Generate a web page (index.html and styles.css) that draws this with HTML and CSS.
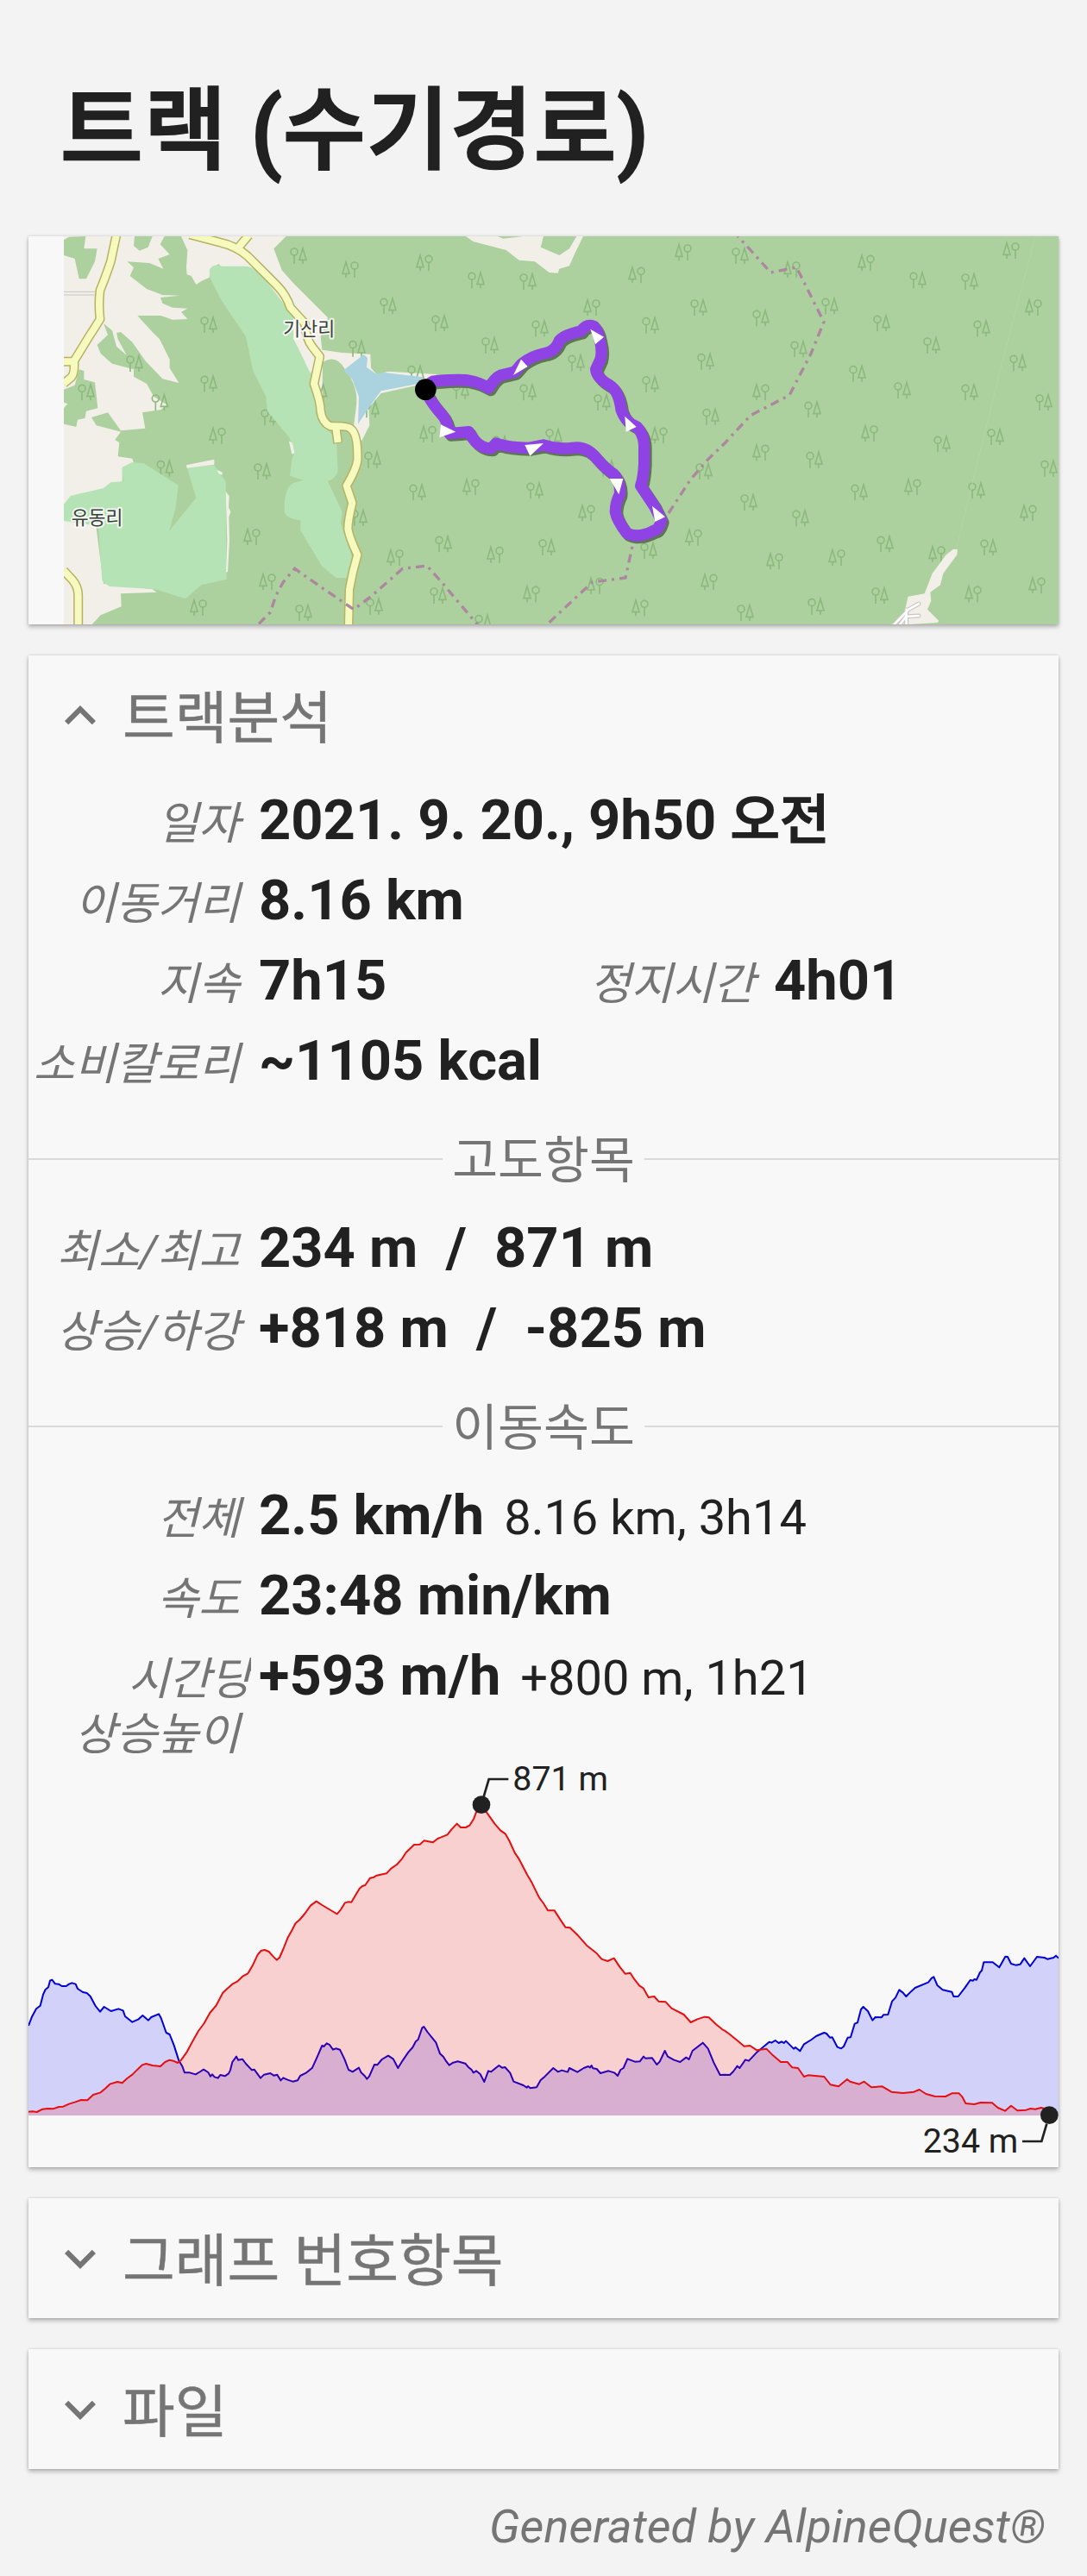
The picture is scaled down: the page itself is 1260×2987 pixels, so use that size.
FILE: index.html
```html
<!DOCTYPE html>
<html lang="ko">
  <head>
    <meta charset="UTF-8" />
    <title>트랙 (수기경로)</title>
    <link rel="stylesheet" href="styles.css">
  </head>
  <body>
    <h1>트랙 (수기경로)</h1>

    <section class="card map">
      <svg viewBox="99 42 3582 1350">
        <defs>
          <g id="treeA" class="tree">
            <circle cx="15" cy="16" r="12" />
            <path d="M15 28V58M45 44V58M45 3L33 44H57Z" />
          </g>
          <g id="treeB" class="tree">
            <circle cx="45" cy="16" r="12" />
            <path d="M45 28V58M15 44V58M15 3L3 44H27Z" />
          </g>
        </defs>
        <rect class="forest" x="222" y="42" width="3459" height="1350" />

        <!-- open land -->
        <g transform="translate(60)" class="land">
          <path d="M570 42H935L892 85 920 160 960 205 1080 325 1055 390 1060 437 1130 447 1228 452 1230 500 1250 522 1290 512 1458 522V545L1265 588 1222 640 1225 700 1197 755 1175 705 1050 690 1020 510 960 400 700 138 672 155 668 185 640 198 622 210 605 180 590 175 588 150 592 90Z" />
          <path d="M162 42H512L497 70 530 105 490 120 508 155 460 135 382 130 405 150 392 180 450 225 505 246 565 248 498 255 505 275 540 290 592 293 570 305 592 330 540 332 500 318 418 318 470 375 495 400 530 470V500L562 552 505 538 445 475 400 410 360 375 345 378 350 400 380 455 345 425 330 370 300 345 315 385 278 420 290 450 330 485 405 505V530L450 555 475 600 520 628 500 645 435 655 445 710 360 718 315 655 258 672 275 700 360 722 340 750 355 760 350 808 400 815 405 830 365 850V895L162 990Z" />
          <path d="M162 1020H270L300 1250 470 1270 485 1280 360 1285 362 1330 290 1360 260 1392H162Z" />
        </g>
        <path class="land" transform="translate(1290)" d="M330 42L355 60 470 90 515 125 570 130 620 168 650 170 655 155 690 145 705 110 738 42H715L690 85 655 108 590 80 600 42H530L460 50 440 42Z" />
        <g transform="translate(60)" class="forest">
          <path d="M162 55L180 44 238 42 232 85 278 85 270 130 240 190H215L200 120 162 108Z" />
          <path d="M408 42H470L455 80 425 92 405 75Z" />
          <path d="M162 575L200 560 215 505 232 510V540L270 550 280 640 240 650 235 675 210 680 205 705 162 695V640L175 625 162 620Z" />
          <path d="M1062 480Q1110 450 1140 505Q1190 570 1178 640L1170 702 1100 700 1060 660Z" />
        </g>

        <g id="trees"></g>

        <g transform="translate(60)" class="golf">
          <path d="M162 975L185 945 300 918 325 898 368 895 365 845 400 828 440 832 560 908 550 990 528 1068 622 952 590 845 685 838 725 895 728 1235 640 1255 585 1303 480 1270 320 1260 295 1240 282 1050 162 1032Z" />
          <path d="M668 160Q680 135 712 146L800 146Q830 152 860 190L960 320V400L1000 470 1025 520 1050 680 1110 750 1115 860Q1105 885 1080 895L1130 1000 1125 1040 1165 1160 1150 1230H1110L1060 1190 1030 1140 985 1065V1030Q940 1025 930 1005Q925 920 960 900L995 890 948 875 955 820 965 790 945 740 870 650 865 600 820 510 795 390 710 265 670 185Z" />
        </g>
        <g transform="translate(60)" class="land">
          <path d="M588 838L685 818V836L590 848ZM695 855L712 862 714 872 700 868ZM725 930L737 945 735 985 742 1000 736 1020 738 1100 732 1210H726L730 1100ZM945 755L956 760 965 795 955 800ZM985 395L1025 500 1020 520 962 400Z" />
        </g>
        <path class="water" transform="translate(60)" d="M1135 508L1205 453 1218 465 1215 498 1250 522 1270 515 1410 532 1410 552 1265 580 1232 625 1185 695 1188 600 1165 540Z" />

        <!-- top of the service road on the right side -->
        <g transform="translate(2520)">
          <path class="trail" d="M1080 42L960 500 805 1130" />
          <path class="land" d="M580 1392L625 1350 638 1295 695 1285 722 1215 770 1150 795 1130 810 1132 808 1150 760 1215 750 1255 715 1280 718 1310 705 1340 745 1380 740 1386 640 1392Z" />
          <path class="path-edge" d="M590 1392L640 1340 675 1320M610 1392L630 1365 675 1362M632 1340V1392" />
          <path class="path-fill" d="M590 1392L640 1340 675 1320M610 1392L630 1365 675 1362M632 1340V1392" />
        </g>

        <g transform="translate(60)">
          <path class="lane" d="M162 235H272M162 246H272" />
          <g id="roads">
            <path class="road-edge" d="M345 36L325 130Q305 190 288 230Q282 280 288 330Q270 360 250 390L198 475Q200 520 188 532L162 554M162 478H200M162 1205L190 1235Q212 1260 212 1290V1398M600 36L700 62Q760 75 800 110L900 210Q935 245 950 290L1000 345Q1005 400 1025 425L1052 460 1032 555Q1055 620 1055 650Q1060 690 1090 703Q1150 700 1160 712Q1185 730 1183 820Q1180 850 1145 910L1165 970Q1150 1030 1150 1060Q1155 1090 1183 1150Q1165 1210 1155 1270L1152 1398M770 80L805 38M1108 708L1115 762" />
            <path class="road" d="M345 36L325 130Q305 190 288 230Q282 280 288 330Q270 360 250 390L198 475Q200 520 188 532L162 554M162 478H200M162 1205L190 1235Q212 1260 212 1290V1398M600 36L700 62Q760 75 800 110L900 210Q935 245 950 290L1000 345Q1005 400 1025 425L1052 460 1032 555Q1055 620 1055 650Q1060 690 1090 703Q1150 700 1160 712Q1185 730 1183 820Q1180 850 1145 910L1165 970Q1150 1030 1150 1060Q1155 1090 1183 1150Q1165 1210 1155 1270L1152 1398M770 80L805 38M1108 708L1115 759" />
          </g>
          <path class="border" d="M840 1390L880 1350 900 1290 925 1245 965 1198 1050 1258 1170 1340 1230 1295 1340 1198 1425 1188 1480 1250 1530 1310 1600 1392" />
        </g>
        <path class="border" transform="translate(1290)" d="M620 1385L770 1245 885 1230 910 1115M1035 1005L1110 890 1170 820 1230 762 1320 665 1455 595 1530 450 1575 340 1480 150 1390 168 1320 90 1275 42" />

        <text class="place" x="985" y="387">기산리</text>
        <text class="place" x="248" y="1044">유동리</text>
        <rect class="blank" x="99" y="42" width="123" height="1350" />

        <!-- recorded track -->
        <g transform="translate(1290)">
          <path class="track-shadow" transform="translate(7 8)" d="M190 575Q205 545 225 545Q320 538 345 545Q375 550 410 570Q430 535 450 526L500 514 525 485Q560 458 600 450Q640 445 655 405Q670 385 730 372Q750 345 775 355Q790 370 795 400Q806 440 798 470L782 505Q785 535 830 560Q862 580 870 645Q885 690 925 705Q950 735 950 770V830Q948 880 938 910L985 980 1010 1030Q1000 1065 985 1065Q930 1095 890 1075Q855 1030 850 1000Q850 970 865 940Q870 900 845 870Q810 845 785 815Q750 770 700 778Q650 785 600 768L550 778Q480 778 435 762L418 780Q370 780 340 722Q310 725 272 727Q265 680 245 660Q210 620 198 595" />
          <path class="track" d="M190 575Q205 545 225 545Q320 538 345 545Q375 550 410 570Q430 535 450 526L500 514 525 485Q560 458 600 450Q640 445 655 405Q670 385 730 372Q750 345 775 355Q790 370 795 400Q806 440 798 470L782 505Q785 535 830 560Q862 580 870 645Q885 690 925 705Q950 735 950 770V830Q948 880 938 910L985 980 1010 1030Q1000 1065 985 1065Q930 1095 890 1075Q855 1030 850 1000Q850 970 865 940Q870 900 845 870Q810 845 785 815Q750 770 700 778Q650 785 600 768L550 778Q480 778 435 762L418 780Q370 780 340 722Q310 725 272 727Q265 680 245 660Q210 620 198 595" />
          <path class="arrow" d="M763 365L810 392 780 418ZM522 470L545 495 495 525ZM883 668L923 705 887 722ZM978 980L1023 1018 988 1035ZM830 885L877 885 862 940ZM535 768L600 762 553 806ZM243 697L295 722 238 742Z" />
          <circle cx="190" cy="575" r="37" />
        </g>
      </svg>
    </section>

    <section class="card">
      <header class="card-head">
        <svg class="chevron" viewBox="0 0 24 24"><path d="M12 8l-6 6 1.41 1.41L12 10.83l4.59 4.58L18 14z" /></svg>
        <h2>트랙분석</h2>
      </header>
      <div class="rows first">
        <div class="row">
          <div class="item"><span class="label">일자</span><b>2021. 9. 20., 9h50 <span class="ko">오전</span></b></div>
        </div>
        <div class="row">
          <div class="item"><span class="label">이동거리</span><b>8.16 km</b></div>
        </div>
        <div class="row">
          <div class="item"><span class="label">지속</span><b>7h15</b></div>
          <div class="item"><span class="label">정지시간</span><b>4h01</b></div>
        </div>
        <div class="row">
          <div class="item"><span class="label">소비칼로리</span><b>~1105 kcal</b></div>
        </div>
      </div>
      <h3>고도항목</h3>
      <div class="rows">
        <div class="row">
          <div class="item"><span class="label">최소/최고</span><b>234 m&nbsp; /&nbsp; 871 m</b></div>
        </div>
        <div class="row">
          <div class="item"><span class="label">상승/하강</span><b>+818 m&nbsp; /&nbsp; -825 m</b></div>
        </div>
      </div>
      <h3>이동속도</h3>
      <div class="rows">
        <div class="row">
          <div class="item"><span class="label">전체</span><b>2.5 km/h</b><span class="detail">8.16 km, 3h14</span></div>
        </div>
        <div class="row">
          <div class="item"><span class="label">속도</span><b>23:48 min/km</b></div>
        </div>
        <div class="row tall">
          <div class="item"><span class="label two-lines"><span class="over">시간당</span><span>상승높이</span></span><b>+593 m/h</b><span class="detail">+800 m, 1h21</span></div>
        </div>
      </div>
      <svg class="chart" viewBox="99 0 3582 1419">
        <path id="speedArea" class="speed-area" />
        <path id="speedLine" class="speed-line" />
        <path id="altArea" class="alt-area" />
        <path id="altLine" class="alt-line" />
        <path class="leader" d="M1682 130L1700 69H1768M3640 1268L3622 1329H3555" />
        <circle class="dot" cx="1674" cy="158" r="31" />
        <circle class="dot" cx="3649" cy="1238" r="31" />
        <text class="mark" x="1783" y="108">871 m</text>
        <text class="mark end" x="3541" y="1367">234 m</text>
      </svg>
    </section>

    <section class="card">
      <header class="card-head">
        <svg class="chevron" viewBox="0 0 24 24"><path d="M16.59 8.59L12 13.17 7.41 8.59 6 10l6 6 6-6z" /></svg>
        <h2>그래프 번호항목</h2>
      </header>
    </section>

    <section class="card">
      <header class="card-head">
        <svg class="chevron" viewBox="0 0 24 24"><path d="M16.59 8.59L12 13.17 7.41 8.59 6 10l6 6 6-6z" /></svg>
        <h2>파일</h2>
      </header>
    </section>

    <footer>Generated by AlpineQuest®</footer>
    <script src="script.js"></script>
  </body>
</html>
```

FILE: styles.css
```css
body {
  margin: 0;
  padding: 0 33px;
  background-color: #f3f3f3;
  color: #212121;
  font-family: Roboto, "Noto Sans CJK KR", sans-serif;
}
h1 {
  margin: 0;
  padding: 78px 0 46px 37px;
  font-size: 104px;
  line-height: 150px;
  font-weight: 500;
  letter-spacing: 1.2px;
  -webkit-text-stroke: 2.5px #212121;
}
.card {
  background-color: #f8f8f8;
  margin-bottom: 36px;
  box-shadow: 0 3px 5px rgba(0, 0, 0, 0.26), 0 0 3px rgba(0, 0, 0, 0.14);
}
.card-head {
  display: flex;
  align-items: center;
  height: 139px;
  padding-left: 24px;
  color: #757575;
}
.chevron {
  width: 72px;
  height: 72px;
  fill: #757575;
}
h2 {
  margin: 0 0 0 13px;
  padding-top: 8px;
  font-size: 66px;
  line-height: 90px;
  font-weight: 400;
  -webkit-text-stroke: 0.5px #757575;
}
h3 {
  display: flex;
  align-items: center;
  gap: 11px;
  height: 124px;
  margin: 0;
  padding-top: 16px;
  box-sizing: border-box;
  color: #757575;
  font-size: 57.5px;
  font-weight: 400;
  line-height: 80px;
}
h3::before,
h3::after {
  content: "";
  flex: 1;
  height: 2px;
  margin-bottom: 6px;
  background-color: #dadada;
}
.rows.first {
  padding-top: 6px;
}
.row {
  display: grid;
  grid-template-columns: 1fr 1fr;
  height: 93px;
  line-height: 93px;
}
.row.tall {
  height: 143px;
}
.item {
  display: flex;
  align-items: baseline;
  white-space: nowrap;
}
.label {
  width: 258px;
  flex: none;
  box-sizing: border-box;
  padding-right: 13px;
  margin-right: 9px;
  text-align: right;
  color: #757575;
  font-size: 52px;
  font-style: italic;
}
.two-lines {
  display: flex;
  flex-direction: column;
  line-height: 64px;
  overflow: hidden;
}
.two-lines .over {
  margin-right: -14px;
}
b {
  font-size: 65px;
  font-weight: 700;
  font-kerning: none;
}
b .ko {
  font-size: 62.5px;
  font-weight: 500;
  -webkit-text-stroke: 1.5px #212121;
}
.detail {
  margin-left: 23px;
  font-size: 56px;
}
footer {
  padding: 1px 15px 0 0;
  text-align: right;
  color: #757575;
  font-size: 54.1px;
  line-height: 60px;
  font-style: italic;
}

/* map */
.map svg,
.chart {
  display: block;
  width: 100%;
}
.map svg {
  height: 450px;
}
.forest {
  fill: #add19e;
}
.land {
  fill: #f2efe9;
}
.golf {
  fill: #b5e3b5;
}
.water {
  fill: #aad3df;
}
.blank {
  fill: #f8f8f8;
}
.tree {
  fill: none;
  stroke: #8db97f;
  stroke-width: 5;
}
.trail {
  fill: none;
  stroke: #b2d5a4;
  stroke-width: 3;
}
.path-edge,
.path-fill {
  fill: none;
  stroke: #c9c6c3;
  stroke-width: 15;
  stroke-linecap: round;
}
.path-fill {
  stroke: #fff;
  stroke-width: 8;
}
.lane {
  fill: none;
  stroke: #c8c5c3;
  stroke-width: 3;
}
.road-edge,
.road {
  fill: none;
  stroke: #b5b264;
  stroke-width: 33;
  stroke-linejoin: round;
}
.road {
  stroke: #f7fabf;
  stroke-width: 24;
}
.border {
  fill: none;
  stroke: #ad86a0;
  stroke-width: 10;
  stroke-dasharray: 30 18 9 18;
}
.place {
  fill: #3c3c3c;
  stroke: rgba(255, 255, 255, 0.8);
  stroke-width: 12;
  stroke-linejoin: round;
  paint-order: stroke;
  font-size: 65px;
  font-weight: 400;
}
.track,
.track-shadow {
  fill: none;
  stroke: #8f43e5;
  stroke-width: 40;
  stroke-linejoin: round;
  stroke-linecap: round;
}
.track-shadow {
  stroke: #5f7557;
}
.arrow {
  fill: #fff;
}

/* chart */
.chart {
  height: 473px;
}
.speed-area {
  fill: rgba(0, 0, 255, 0.155);
}
.alt-area {
  fill: rgba(255, 0, 0, 0.16);
}
.speed-line,
.alt-line {
  fill: none;
  stroke: #0000d8;
  stroke-width: 6;
  stroke-linejoin: round;
}
.alt-line {
  stroke: #e50f0f;
}
.leader {
  fill: none;
  stroke: #212121;
  stroke-width: 8;
}
.dot,
.mark {
  fill: #212121;
}
.mark {
  font-size: 118px;
}
.mark.end {
  text-anchor: end;
}
```

FILE: script.js
```js
const BASE = 1239;

// x,y pairs; every block starts at its own x offset
const altitude = [
  [0, "99,1226 112,1225 128,1227 148,1217 166,1215 184,1216 205,1209 220,1208 240,1199 262,1192 282,1185 304,1186 324,1167 350,1159 366,1145 382,1130 408,1122 425,1126 442,1110 460,1097 478,1079 495,1063 508,1059 530,1065 558,1068 574,1053 590,1046 603,1049 618,1056 630,1046 650,1018 668,984 690,945 710,918 730,882 752,856 775,812 790,798 808,782 825,773 845,754 862,745 878,718 896,680 908,666 920,663 935,669 950,686 962,698 972,690 985,660 1000,622 1014,597 1028,570 1042,558 1060,537 1080,509 1100,494 1120,507 1150,525 1172,538 1185,523 1200,499 1210,496 1222,497 1235,475 1250,450"],
  [1260, "0,441 10,438 27,413 40,410 50,404 84,397 100,380 120,366 138,346 152,324 180,297 200,296 215,283 245,289 262,276 296,262 310,244 329,224 342,237 360,237 373,230 387,208 396,184 414,158 432,184 460,224 480,247 498,260 512,285 530,325 545,347 574,403 590,430 615,481 630,501 645,526 668,526 690,560 706,584 722,586 750,613 780,647 816,676 832,695 853,702 875,692 895,722 914,746 932,743 945,764 964,788 977,796 995,828 1015,825 1030,842 1055,844 1075,866 1118,888 1142,915 1165,904 1190,896 1205,898 1230,922 1252,940"],
  [2520, "0,944 18,957 40,975 68,998 88,996 112,1012 145,1007 168,1030 195,1053 218,1053 235,1072 255,1074 276,1104 290,1099 346,1104 368,1132 396,1138 426,1113 436,1121 468,1130 485,1121 510,1141 548,1138 580,1157 620,1161 658,1157 677,1149 700,1164 730,1172 768,1173 790,1162 815,1162 826,1174 838,1197 868,1200 890,1194 930,1195 950,1212 975,1223 996,1205 1018,1222 1048,1220 1064,1215 1080,1217 1100,1212 1129,1219"],
];
const speed = [
  [0, "99,927 110,898 126,868 140,857 150,818 158,801 168,793 174,770 181,767 192,781 204,782 215,789 230,789 240,782 250,778 263,782 270,798 288,810 302,813 314,824 332,858 348,878 362,861 386,876 412,868 428,874 435,894 460,914 482,904 496,891 516,908 526,897 552,886 560,900 578,951 590,957 605,995 622,1048 634,1068 642,1090 660,1090 680,1096 697,1086 708,1079 724,1089 732,1103 738,1096 746,1105 758,1109 766,1098 782,1102 795,1093 801,1081 808,1053 822,1034 828,1046 843,1043 855,1059 876,1081 884,1079 906,1109 918,1097 940,1092 952,1100 964,1097 976,1117 985,1108 1000,1115 1018,1121 1035,1117 1044,1101 1064,1091 1086,1073 1105,1031 1120,996 1126,999 1136,988 1146,993 1158,1010 1168,1006 1182,1010 1198,1043 1212,1080 1226,1087 1248,1073 1256,1090"],
  [1260, "8,1101 16,1112 24,1103 42,1062 52,1063 68,1044 90,1031 108,1043 124,1074 140,1048 160,1019 175,1002 186,981 194,975 208,934 214,930 226,948 242,968 256,985 270,1024 282,1035 290,1048 302,1064 316,1055 332,1051 358,1058 368,1070 380,1080 386,1090 396,1084 410,1095 424,1122 438,1084 448,1087 475,1065 486,1073 496,1071 514,1091 526,1121 560,1134 572,1142 576,1137 584,1144 606,1141 620,1116 635,1103 664,1074 680,1087 694,1082 714,1088 720,1074 748,1088 770,1074 786,1068 792,1072 797,1065 802,1075 815,1077 828,1092 856,1084 876,1090 888,1101 898,1080 908,1074 922,1042 948,1052 965,1051 978,1034 984,1040 1008,1039 1024,1062 1034,1052 1052,1014 1062,1034 1084,1046 1105,1053 1126,1037 1136,1044 1148,1014 1184,986 1202,1006 1222,1055 1244,1098"],
  [2520, "0,1097 18,1098 30,1086 44,1067 52,1074 72,1045 84,1049 112,1019 155,983 163,986 176,978 188,987 198,982 206,987 213,980 240,1007 246,1002 262,1015 276,991 302,975 318,963 346,951 354,954 366,968 374,967 392,1001 405,1006 414,999 428,968 438,967 452,920 462,916 474,870 482,861 498,876 514,908 524,897 545,898 552,889 568,888 582,842 594,829 607,802 620,812 631,825 650,806 662,795 708,776 720,761 727,757 740,787 758,802 790,809 796,825 812,825 836,794 854,768 864,770 868,765 876,767 888,741 894,735 901,706 932,706 955,724 976,686 984,687 996,711 1012,716 1028,713 1042,692 1062,720 1086,687 1112,690 1122,695 1144,690 1152,683 1161,692"],
];

function drawProfile(name, blocks) {
  const points = blocks.flatMap(([offset, text]) =>
    text.split(" ").map((pair) => {
      const [x, y] = pair.split(",").map(Number);
      return [x + offset, y];
    })
  );
  const line = "M" + points.map((p) => p.join(",")).join("L");
  const last = points[points.length - 1][0];
  document.getElementById(name + "Line").setAttribute("d", line);
  document
    .getElementById(name + "Area")
    .setAttribute("d", `${line}L${last},${BASE}L${points[0][0]},${BASE}Z`);
}

drawProfile("alt", altitude);
drawProfile("speed", speed);

// A: round tree on the left, B: round tree on the right
const trees = [
  [60, "A", "948,80 636,320 378,455 210,555 636,525 846,642 1152,403 484,820 822,830 966,1322 1019,555 1158,992 466,590"],
  [60, "B", "1128,128 666,706 786,1058 840,1214 600,1304"],
  [1290, "A", "30,255 210,315 336,165 516,170 384,392 558,333 684,453 774,590 516,555 282,550 126,490 606,710 942,322 1110,260 1134,448 942,527 1152,640 -30,615 -24,790 132,903 540,897 -18,1300 222,1083 204,1262 582,1094 360,1357 936,1107 1128,830 420,735 792,820"],
  [1290, "B", "156,105 894,147 1056,68 738,260 168,700 318,885 720,975 54,1130 402,1120 528,1257 750,1228 972,705 906,1305 1092,1060 1146,1215"],
  [2520, "A", "24,80 96,297 228,405 336,255 516,315 642,165 822,170 690,392 864,333 990,453 432,490 588,548 822,555 276,615 1080,590 282,790 726,735 912,710 438,903 846,897 1098,820 54,938 234,993 528,1083 888,1095 510,1262 288,1300 42,1322"],
  [2520, "B", "204,128 462,105 966,62 1044,260 96,555 474,698 96,765 624,885 1026,975 144,1143 360,1130 708,1118 834,1257 1056,1227"],
];

document.getElementById("trees").innerHTML = trees
  .flatMap(([offset, kind, text]) =>
    text.split(" ").map((pair) => {
      const [x, y] = pair.split(",").map(Number);
      return `<use href="#tree${kind}" x="${x + offset}" y="${y}" />`;
    })
  )
  .join("");
```
